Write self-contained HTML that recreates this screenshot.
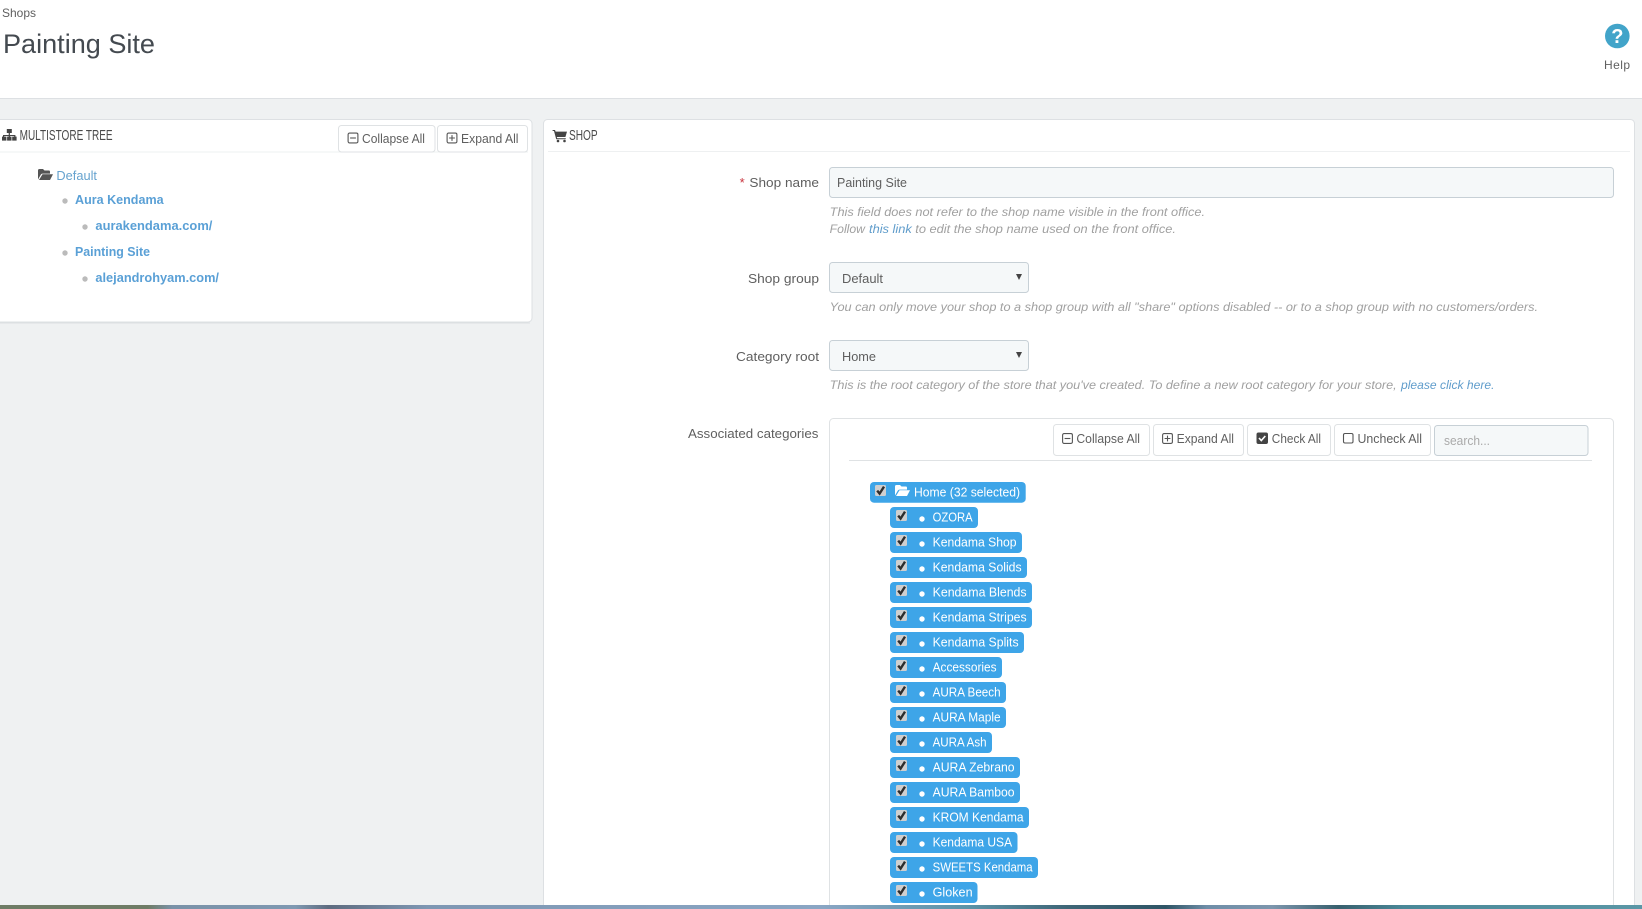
<!DOCTYPE html>
<html lang="en">
<head>
<meta charset="utf-8">
<title>Painting Site</title>
<style>
html,body{margin:0;padding:0;width:1642px;height:909px;overflow:hidden;background:#eff1f2}
svg{display:block}
text{font-family:"Liberation Sans",sans-serif;fill:#5f5f5f;font-size:13px}
.b{font-weight:bold;fill:#5aa0d6}
.h{font-style:italic;fill:#a0a0a0;font-size:12px}
.l{fill:#5f9ccb}
.p{fill:#fff;font-size:12.5px;transform:translateY(-.5px)}
.hd{font-size:14.5px;fill:#4a4a4a}
.btn{fill:#fff;stroke:#dfe2e4;stroke-width:1;rx:3px}
.ctl{fill:#f5f8f9;stroke:#c7d0d6;stroke-width:1;rx:3px}
.pill{fill:#3ea5e8;rx:4px}
.ol{fill:none;stroke:#555;stroke-width:1.1}
</style>
</head>
<body>
<svg width="1642" height="909" viewBox="0 0 1642 909" xmlns="http://www.w3.org/2000/svg">
<defs>
<linearGradient id="strip" x1="0" x2="1642" y1="0" y2="0" gradientUnits="userSpaceOnUse">
<stop offset="0" stop-color="#6f7c66"/><stop offset=".09" stop-color="#6f7c66"/><stop offset=".105" stop-color="#7a92a8"/>
<stop offset=".18" stop-color="#7f99b2"/><stop offset=".2" stop-color="#5e6c80"/><stop offset=".26" stop-color="#7e97b3"/>
<stop offset=".5" stop-color="#8aa6c4"/><stop offset=".59" stop-color="#5b93a8"/><stop offset=".65" stop-color="#3f6677"/>
<stop offset=".71" stop-color="#2f5566"/><stop offset=".735" stop-color="#6f8ea8"/><stop offset=".775" stop-color="#7d96ad"/>
<stop offset=".815" stop-color="#38606e"/><stop offset=".855" stop-color="#4a8898"/><stop offset="1" stop-color="#5b97a6"/>
</linearGradient>
<g id="cb"><rect width="11" height="11" rx="1.5" fill="#cfcfcf"/><path d="M2.2 5.6 L4.6 8.6 L9 1.6" fill="none" stroke="#2e2e2e" stroke-width="2.4"/></g>
<g id="minus"><rect x=".6" y=".6" width="9.8" height="9.8" rx="1.5" class="ol"/><path d="M2.6 5.5H8.4" class="ol"/></g>
<g id="plus"><rect x=".6" y=".6" width="9.8" height="9.8" rx="1.5" class="ol"/><path d="M2.6 5.5H8.4M5.5 2.6V8.4" class="ol"/></g>
<path id="folder" d="M0 1.5Q0 0 1.5 0H5L6.5 1.5H11Q12 1.5 12 3V4.6H4.5Q3.4 4.6 2.8 5.6L0 10.5ZM4.5 5.2H15L12 11H1Z"/>
</defs>

<!-- header -->
<rect width="1642" height="98" fill="#fff"/>
<rect y="98" width="1642" height="1" fill="#dde0e3"/>
<text x="2" y="17" textLength="34" lengthAdjust="spacingAndGlyphs" style="font-size:12px">Shops</text>
<text x="3" y="53" textLength="152" lengthAdjust="spacingAndGlyphs" style="font-size:27px;fill:#444a50">Painting Site</text>
<circle cx="1617.3" cy="36" r="12.3" fill="#42a4c9"/>
<text x="1617.3" y="43" text-anchor="middle" style="font-size:20px;font-weight:bold;fill:#fff">?</text>
<text x="1604" y="69" textLength="26" lengthAdjust="spacing" style="font-size:12px">Help</text>

<!-- left panel -->
<rect x="-6" y="119.5" width="538" height="202.5" rx="4" fill="#fff" stroke="#dde0e3"/>
<rect y="322.5" width="530" height="1" fill="#dcdfe2"/>
<rect x="0" y="151.5" width="528" height="1" fill="#eef0f1"/>
<g fill="#444"><rect x="6.8" y="129" width="5" height="4"/><path d="M8.7 132.5h1.2v2.5h5.5v2h-1.2v-1h-4.3v1H8.7v-1H4.2v1H3v-2h5.7z"/><rect x="2" y="136.6" width="4.4" height="4"/><rect x="7.1" y="136.6" width="4.4" height="4"/><rect x="12.2" y="136.6" width="4.4" height="4"/></g>
<text x="19.6" y="140" class="hd" textLength="93" lengthAdjust="spacingAndGlyphs">MULTISTORE TREE</text>
<rect x="338.5" y="125.5" width="96.5" height="26.5" class="btn"/>
<rect x="437.5" y="125.5" width="90" height="26.5" class="btn"/>
<use href="#minus" x="347.5" y="132.5"/><text x="362" y="143" textLength="63" lengthAdjust="spacingAndGlyphs">Collapse All</text>
<use href="#plus" x="446.5" y="132.5"/><text x="461" y="143" textLength="57.5" lengthAdjust="spacingAndGlyphs">Expand All</text>
<use href="#folder" x="38" y="169" fill="#555"/>
<text x="56.4" y="180" class="l" textLength="40.6" lengthAdjust="spacingAndGlyphs" style="fill:#66a3cf">Default</text>
<g fill="#bbb"><circle cx="65" cy="201" r="2.7"/><circle cx="85" cy="227" r="2.7"/><circle cx="65" cy="253" r="2.7"/><circle cx="85" cy="279" r="2.7"/></g>
<text x="75" y="204" class="b" textLength="88.6" lengthAdjust="spacingAndGlyphs">Aura Kendama</text>
<text x="95.4" y="230" class="b" textLength="117" lengthAdjust="spacingAndGlyphs">aurakendama.com/</text>
<text x="75" y="256" class="b" textLength="75" lengthAdjust="spacingAndGlyphs">Painting Site</text>
<text x="95.4" y="282" class="b" textLength="123.6" lengthAdjust="spacingAndGlyphs">alejandrohyam.com/</text>

<!-- right panel -->
<rect x="543.5" y="119.5" width="1091" height="800" rx="4" fill="#fff" stroke="#dde0e3"/>
<rect x="548" y="151" width="1082" height="1" fill="#eef0f1"/>
<path d="M552.6 130H555l.6 1.6H567l-1.6 5.4h-8.6l.4 1.2h8.6v1h-9.6l-2.2-8.2h-1.4z" fill="#444"/><circle cx="558" cy="141" r="1.3" fill="#444"/><circle cx="564.5" cy="141" r="1.3" fill="#444"/>
<text x="569" y="140" class="hd" textLength="28.6" lengthAdjust="spacingAndGlyphs">SHOP</text>

<text x="739.6" y="187" style="fill:#c8323c;font-size:13px">*</text>
<text x="749.4" y="187" textLength="69.6" lengthAdjust="spacingAndGlyphs">Shop name</text>
<rect x="829.5" y="167.5" width="784" height="30" class="ctl"/>
<text x="837" y="187" textLength="70" lengthAdjust="spacingAndGlyphs">Painting Site</text>
<text x="829.7" y="216" class="h" textLength="375.3" lengthAdjust="spacingAndGlyphs">This field does not refer to the shop name visible in the front office.</text>
<text x="829.7" y="233" class="h" textLength="35.3" lengthAdjust="spacingAndGlyphs">Follow</text>
<text x="869" y="233" class="h" textLength="42.8" lengthAdjust="spacingAndGlyphs" style="fill:#5f9ccb">this link</text>
<text x="915.3" y="233" class="h" textLength="260.7" lengthAdjust="spacingAndGlyphs">to edit the shop name used on the front office.</text>

<text x="748" y="283" textLength="71" lengthAdjust="spacingAndGlyphs">Shop group</text>
<rect x="829.5" y="262.5" width="199" height="30" class="ctl"/>
<text x="842" y="283" textLength="41" lengthAdjust="spacingAndGlyphs">Default</text>
<path d="M1016 274h6l-3 6z" fill="#444"/>
<text x="829.7" y="311" class="h" textLength="708.3" lengthAdjust="spacingAndGlyphs">You can only move your shop to a shop group with all "share" options disabled -- or to a shop group with no customers/orders.</text>

<text x="736" y="361" textLength="83" lengthAdjust="spacingAndGlyphs">Category root</text>
<rect x="829.5" y="340.5" width="199" height="30" class="ctl"/>
<text x="842" y="361" textLength="34" lengthAdjust="spacingAndGlyphs">Home</text>
<path d="M1016 352h6l-3 6z" fill="#444"/>
<text x="829.7" y="389" class="h" textLength="567" lengthAdjust="spacingAndGlyphs">This is the root category of the store that you've created. To define a new root category for your store,</text>
<text x="1401" y="389" class="h" textLength="93.5" lengthAdjust="spacingAndGlyphs" style="fill:#5f9ccb">please click here.</text>

<text x="688" y="438" textLength="130.4" lengthAdjust="spacingAndGlyphs">Associated categories</text>
<rect x="829.5" y="418.5" width="784" height="500" rx="4" fill="#fff" stroke="#dfe2e4"/>
<rect x="1053.5" y="424.5" width="96" height="31" class="btn"/>
<rect x="1153.5" y="424.5" width="90" height="31" class="btn"/>
<rect x="1247.5" y="424.5" width="83" height="31" class="btn"/>
<rect x="1334.5" y="424.5" width="96" height="31" class="btn"/>
<rect x="1434.5" y="425.5" width="153.5" height="30" class="ctl"/>
<use href="#minus" x="1062" y="433"/><text x="1076.4" y="443" textLength="63.6" lengthAdjust="spacingAndGlyphs">Collapse All</text>
<use href="#plus" x="1162" y="433"/><text x="1176.6" y="443" textLength="57.4" lengthAdjust="spacingAndGlyphs">Expand All</text>
<rect x="1256.5" y="432.5" width="11.5" height="11.5" rx="2" fill="#444"/><path d="M1259 438l2.3 2.5 4-4.5" fill="none" stroke="#fff" stroke-width="1.6"/>
<text x="1271.8" y="443" textLength="49.2" lengthAdjust="spacingAndGlyphs">Check All</text>
<rect x="1343.5" y="433.5" width="9.5" height="9.5" rx="1.5" class="ol"/>
<text x="1357.5" y="443" textLength="64.5" lengthAdjust="spacingAndGlyphs">Uncheck All</text>
<text x="1444" y="445" textLength="46" lengthAdjust="spacingAndGlyphs" style="fill:#aaa">search...</text>
<rect x="849" y="460" width="743" height="1" fill="#dfe2e4"/>

<!-- tree -->
<rect x="870" y="482" width="155.7" height="20.7" class="pill"/>
<use href="#cb" x="875" y="485"/>
<use href="#folder" x="895" y="485" fill="#fff"/>
<text x="914" y="497" class="p" textLength="106" lengthAdjust="spacingAndGlyphs">Home (32 selected)</text>

<rect x="890" y="507" width="88" height="21" class="pill"/><use href="#cb" x="896" y="510"/><circle cx="922" cy="519" r="2.7" fill="#fff"/><text x="932.6" y="522" class="p" textLength="40" lengthAdjust="spacingAndGlyphs">OZORA</text>
<rect x="890" y="532" width="132" height="21" class="pill"/><use href="#cb" x="896" y="535"/><circle cx="922" cy="544" r="2.7" fill="#fff"/><text x="932.6" y="547" class="p" textLength="84" lengthAdjust="spacingAndGlyphs">Kendama Shop</text>
<rect x="890" y="557" width="137" height="21" class="pill"/><use href="#cb" x="896" y="560"/><circle cx="922" cy="569" r="2.7" fill="#fff"/><text x="932.6" y="572" class="p" textLength="89" lengthAdjust="spacingAndGlyphs">Kendama Solids</text>
<rect x="890" y="582" width="142" height="21" class="pill"/><use href="#cb" x="896" y="585"/><circle cx="922" cy="594" r="2.7" fill="#fff"/><text x="932.6" y="597" class="p" textLength="94" lengthAdjust="spacingAndGlyphs">Kendama Blends</text>
<rect x="890" y="607" width="142" height="21" class="pill"/><use href="#cb" x="896" y="610"/><circle cx="922" cy="619" r="2.7" fill="#fff"/><text x="932.6" y="622" class="p" textLength="94" lengthAdjust="spacingAndGlyphs">Kendama Stripes</text>
<rect x="890" y="632" width="134" height="21" class="pill"/><use href="#cb" x="896" y="635"/><circle cx="922" cy="644" r="2.7" fill="#fff"/><text x="932.6" y="647" class="p" textLength="86" lengthAdjust="spacingAndGlyphs">Kendama Splits</text>
<rect x="890" y="657" width="112" height="21" class="pill"/><use href="#cb" x="896" y="660"/><circle cx="922" cy="669" r="2.7" fill="#fff"/><text x="932.6" y="672" class="p" textLength="64" lengthAdjust="spacingAndGlyphs">Accessories</text>
<rect x="890" y="682" width="116" height="21" class="pill"/><use href="#cb" x="896" y="685"/><circle cx="922" cy="694" r="2.7" fill="#fff"/><text x="932.6" y="697" class="p" textLength="68" lengthAdjust="spacingAndGlyphs">AURA Beech</text>
<rect x="890" y="707" width="116" height="21" class="pill"/><use href="#cb" x="896" y="710"/><circle cx="922" cy="719" r="2.7" fill="#fff"/><text x="932.6" y="722" class="p" textLength="68" lengthAdjust="spacingAndGlyphs">AURA Maple</text>
<rect x="890" y="732" width="102" height="21" class="pill"/><use href="#cb" x="896" y="735"/><circle cx="922" cy="744" r="2.7" fill="#fff"/><text x="932.6" y="747" class="p" textLength="54" lengthAdjust="spacingAndGlyphs">AURA Ash</text>
<rect x="890" y="757" width="130" height="21" class="pill"/><use href="#cb" x="896" y="760"/><circle cx="922" cy="769" r="2.7" fill="#fff"/><text x="932.6" y="772" class="p" textLength="82" lengthAdjust="spacingAndGlyphs">AURA Zebrano</text>
<rect x="890" y="782" width="130" height="21" class="pill"/><use href="#cb" x="896" y="785"/><circle cx="922" cy="794" r="2.7" fill="#fff"/><text x="932.6" y="797" class="p" textLength="82" lengthAdjust="spacingAndGlyphs">AURA Bamboo</text>
<rect x="890" y="807" width="139" height="21" class="pill"/><use href="#cb" x="896" y="810"/><circle cx="922" cy="819" r="2.7" fill="#fff"/><text x="932.6" y="822" class="p" textLength="91" lengthAdjust="spacingAndGlyphs">KROM Kendama</text>
<rect x="890" y="832" width="127.5" height="21" class="pill"/><use href="#cb" x="896" y="835"/><circle cx="922" cy="844" r="2.7" fill="#fff"/><text x="932.6" y="847" class="p" textLength="79.5" lengthAdjust="spacingAndGlyphs">Kendama USA</text>
<rect x="890" y="857" width="148" height="21" class="pill"/><use href="#cb" x="896" y="860"/><circle cx="922" cy="869" r="2.7" fill="#fff"/><text x="932.6" y="872" class="p" textLength="100" lengthAdjust="spacingAndGlyphs">SWEETS Kendama</text>
<rect x="890" y="882" width="87.5" height="21" class="pill"/><use href="#cb" x="896" y="885"/><circle cx="922" cy="894" r="2.7" fill="#fff"/><text x="932.6" y="897" class="p" textLength="40" lengthAdjust="spacingAndGlyphs">Gloken</text>

<!-- desktop strip -->
<rect y="905" width="1642" height="4" fill="url(#strip)"/>
</svg>
</body>
</html>
